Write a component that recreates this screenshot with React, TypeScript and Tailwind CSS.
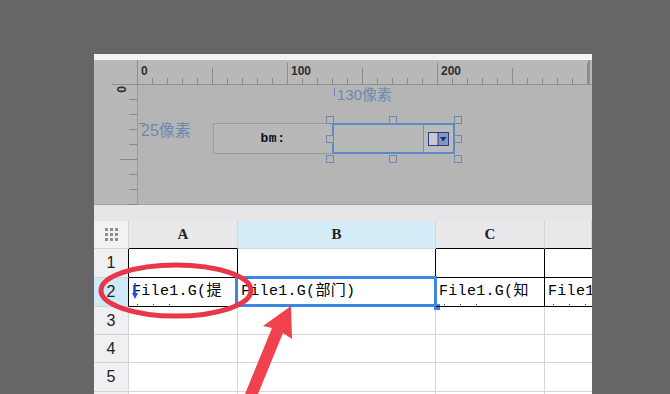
import React from "react";

const cellFont = {
  fontFamily: '"Liberation Mono", "Noto Sans CJK SC", monospace',
};

function TopRuler() {
  const ticks: React.ReactNode[] = [];
  for (let i = 0; i <= 30; i++) {
    const x = i * 15 + 0.5;
    const u = i * 10;
    const y1 = u % 100 === 0 ? (u === 0 ? 0 : 3) : u % 50 === 0 ? 8 : 18;
    ticks.push(
      <line key={i} x1={x} x2={x} y1={y1} y2={24} stroke="#8a8a8a" strokeWidth={1} />
    );
  }
  return (
    <svg width="455" height="25" className="block">
      {ticks}
      <line x1="0" x2="455" y1="24.5" y2="24.5" stroke="#8f8f8f" strokeWidth={1} />
      <rect x="451" y="0" width="2" height="25" fill="#8e8e8e" />
      {[
        ["0", 4],
        ["100", 154],
        ["200", 304],
      ].map(([t, x]) => (
        <text
          key={t as string}
          x={x as number}
          y={15}
          fontSize={12}
          fill="#2e2e2e"
          fontFamily='"Liberation Sans", Arial, sans-serif'
          fontWeight={600}
        >
          {t}
        </text>
      ))}
    </svg>
  );
}

function LeftRuler() {
  const ticks: React.ReactNode[] = [];
  for (let i = 1; i <= 8; i++) {
    const y = -1 + i * 15 + 0.5;
    const x1 = i === 5 ? 26 : 35;
    ticks.push(<line key={i} x1={x1} x2={43} y1={y} y2={y} stroke="#8a8a8a" strokeWidth={1} />);
  }
  return (
    <svg width="43" height="120" className="block">
      {ticks}
      <text
        transform="translate(23,1) rotate(90)"
        fontSize={12}
        fill="#2e2e2e"
        fontFamily='"Liberation Sans", Arial, sans-serif'
        fontWeight={600}
      >
        0
      </text>
    </svg>
  );
}

function Handle({ x, y }: { x: number; y: number }) {
  return (
    <div
      className="absolute w-[8px] h-[8px] border border-[#7089ac] bg-[#b6b6b6]"
      style={{ left: x, top: y }}
    />
  );
}

function Canvas() {
  const label = {
    fontFamily: '"Liberation Sans", "Noto Sans CJK SC", sans-serif',
  };
  return (
    <div className="relative flex-1 h-[120px] border-l border-l-[#9a9a9a] border-b border-b-[#a2a2a2] bg-[#b5b5b5]">
      <div className="absolute left-[196px] top-[3px] w-px h-[8px] bg-[#6a8ab0]" />
      <div
        className="absolute left-[199px] top-[0px] text-[15px] leading-[20px] text-[#6a8ab0]"
        style={label}
      >
        130像素
      </div>
      <div className="absolute left-[1px] top-[38px] w-[6px] h-px bg-[#6a8ab0]" />
      <div
        className="absolute left-[3px] top-[35px] text-[16px] leading-[21px] text-[#6a8ab0]"
        style={label}
      >
        25像素
      </div>
      <div className="absolute left-[75px] top-[38px] w-[120px] h-[31px] border border-[#9c9c9c] bg-[#b8b8b8] flex items-center justify-center">
        <span
          className="text-[13px] font-bold text-[#111] tracking-[0.5px]"
          style={{ fontFamily: '"Liberation Mono", monospace' }}
        >
          bm:
        </span>
      </div>
      <div className="absolute left-[194px] top-[38px] w-[123px] h-[31px] border-2 border-[#5b8ac8] bg-[#b8b8b8] flex justify-end">
        <div className="w-[30px] h-full border-l border-l-[#8a8a8a] rounded-r-[2px] flex items-center justify-center bg-[#bbbbbb]">
          <svg width="21" height="14" className="block">
            <rect x="0.5" y="0.5" width="20" height="13" fill="#c7cad4" stroke="#2a3d78" />
            <rect x="10" y="1" width="10" height="12" fill="#8196c4" />
            <line x1="10" x2="10" y1="0.5" y2="13.5" stroke="#2a3d78" />
            <polygon points="12,5 18.5,5 15.25,9.5" fill="#1c2c66" />
          </svg>
        </div>
      </div>
      <Handle x={188} y={31} />
      <Handle x={251} y={31} />
      <Handle x={316} y={31} />
      <Handle x={188} y={50} />
      <Handle x={316} y={50} />
      <Handle x={188} y={70} />
      <Handle x={251} y={70} />
      <Handle x={316} y={70} />
    </div>
  );
}

function DotGrid() {
  const dots: React.ReactNode[] = [];
  for (let r = 0; r < 3; r++)
    for (let c = 0; c < 3; c++)
      dots.push(<rect key={`${r}${c}`} x={c * 5} y={r * 5} width="3" height="3" fill="#8e8e8e" />);
  return (
    <svg width="13" height="13" className="block">
      {dots}
    </svg>
  );
}

const G = "border-r-[#d4d4d4]";
const GB = "border-b-[#d4d4d4]";

function RowHead({ n, h, active, dark }: { n: number; h: string; active?: boolean; dark?: boolean }) {
  return (
    <div
      className={`w-[35px] ${h} shrink-0 border-r border-b ${dark ? "border-r-black" : G} ${GB} ${
        active ? "bg-[#cfe9f7]" : "bg-[#f0f0f2]"
      } flex items-center justify-center text-[16px] text-[#222]`}
      style={{ fontFamily: '"Liberation Sans", Arial, sans-serif' }}
    >
      {n}
    </div>
  );
}

function CellText({ children }: { children: React.ReactNode }) {
  return (
    <div
      className="pl-[3px] h-full flex items-center whitespace-nowrap overflow-hidden text-[15px] tracking-[0.3px] text-black"
      style={cellFont}
    >
      {children}
    </div>
  );
}

function Dots() {
  return (
    <div className="absolute left-[8px] bottom-[1px] flex gap-[15px]">
      <div className="w-px h-px bg-[#333]" />
      <div className="w-px h-px bg-[#333]" />
      <div className="w-px h-px bg-[#333]" />
    </div>
  );
}

export default function App() {
  return (
    <div className="relative w-[670px] h-[394px] bg-[#666666] overflow-hidden flex">
      <div className="ml-[94px] mt-[54px] w-[498px] h-[340px] flex flex-col bg-white overflow-hidden">
        <div className="h-[6px] bg-[#f4f4f6] shrink-0" />
        <div className="flex flex-col bg-[#b8b8b8] shrink-0">
          <div className="flex h-[25px]">
            <div className="w-[43px] h-[25px] flex flex-col justify-end">
              <div className="ml-[18px] h-px bg-[#8f8f8f]" />
            </div>
            <TopRuler />
          </div>
          <div className="flex h-[120px]">
            <div className="w-[43px] shrink-0 border-b border-b-[#a2a2a2]">
              <LeftRuler />
            </div>
            <Canvas />
          </div>
        </div>
        <div className="h-[16px] bg-[#e6e6e8] shrink-0" />
        <div className="flex flex-col bg-white">
          <div className="flex h-[28px]">
            <div className={`w-[35px] shrink-0 bg-[#f2f2f4] border-r border-b ${G} ${GB} flex items-center justify-center`}>
              <DotGrid />
            </div>
            {[
              ["A", "w-[109px]", "bg-[#e9e9eb]", "border-b-black"],
              ["B", "w-[198px]", "bg-[#d3ecf8]", GB],
              ["C", "w-[109px]", "bg-[#e9e9eb]", "border-b-black"],
              ["", "flex-1", "bg-[#e9e9eb]", "border-b-black"],
            ].map(([t, w, bg, bb], i) => (
              <div
                key={i}
                className={`${w} shrink-0 ${bg} border-r border-b ${G} ${bb} flex items-center justify-center text-[15px] font-semibold text-[#222]`}
                style={{ fontFamily: '"Liberation Serif", serif' }}
              >
                {t}
              </div>
            ))}
          </div>
          <div className="flex h-[29px]">
            <RowHead n={1} h="h-[29px]" dark />
            <div className="w-[109px] shrink-0 border-r border-b border-r-black border-b-black" />
            <div className="w-[198px] shrink-0 border-r border-b border-r-black border-b-[#d4d4d4]" />
            <div className="w-[109px] shrink-0 border-r border-b border-r-black border-b-black" />
            <div className="flex-1 border-b border-b-black" />
          </div>
          <div className="flex h-[29px]">
            <RowHead n={2} h="h-[29px]" active dark />
            <div className="relative w-[109px] shrink-0 border-r border-b border-r-black border-b-black">
              <CellText>File1.G(提</CellText>
              <svg width="6" height="16" className="absolute left-[3px] top-[5px]">
                <line x1="3" x2="3" y1="0" y2="11" stroke="#1f4fe0" strokeWidth="1.5" />
                <polygon points="0,10 6,10 3,16" fill="#1f4fe0" />
              </svg>
              <Dots />
            </div>
            <div className="relative w-[198px] shrink-0 border-r border-b border-r-black border-b-black">
              <CellText>File1.G(部门)</CellText>
              <div className="absolute left-[-3px] top-[-2px] right-[-2px] bottom-[-1px] border-[3px] border-[#3b87e3]" />
              <div className="absolute right-[-5px] bottom-[-4px] w-[6px] h-[6px] bg-[#3b87e3]" />
            </div>
            <div className="relative w-[109px] shrink-0 border-r border-b border-r-black border-b-black">
              <CellText>File1.G(知</CellText>
              <Dots />
            </div>
            <div className="relative flex-1 min-w-0 border-b border-b-black">
              <CellText>File1</CellText>
              <Dots />
            </div>
          </div>
          {[3, 4, 5].map((n) => {
            const h = n === 5 ? "h-[29px]" : "h-[28px]";
            return (
              <div key={n} className={`flex ${h}`}>
                <RowHead n={n} h={h} />
                <div className={`w-[109px] shrink-0 border-r border-b ${G} ${GB}`} />
                <div className={`w-[198px] shrink-0 border-r border-b ${G} ${GB}`} />
                <div className={`w-[109px] shrink-0 border-r border-b ${G} ${GB}`} />
                <div className={`flex-1 border-b ${GB}`} />
              </div>
            );
          })}
          <div className="flex h-[10px]">
            <div className={`w-[35px] shrink-0 bg-[#f0f0f2] border-r ${G}`} />
            <div className={`w-[109px] shrink-0 border-r ${G}`} />
            <div className={`w-[198px] shrink-0 border-r ${G}`} />
            <div className={`w-[109px] shrink-0 border-r ${G}`} />
          </div>
        </div>
      </div>
      <svg width="670" height="394" className="absolute inset-0 pointer-events-none">
        <ellipse cx="176" cy="290.5" rx="75" ry="25.5" fill="none" stroke="#e8364a" strokeWidth="5" />
        <polygon
          points="291,306 292,339 283,333 258,394 245,394 272,328 263,326"
          fill="#f0414f"
        />
      </svg>
    </div>
  );
}
